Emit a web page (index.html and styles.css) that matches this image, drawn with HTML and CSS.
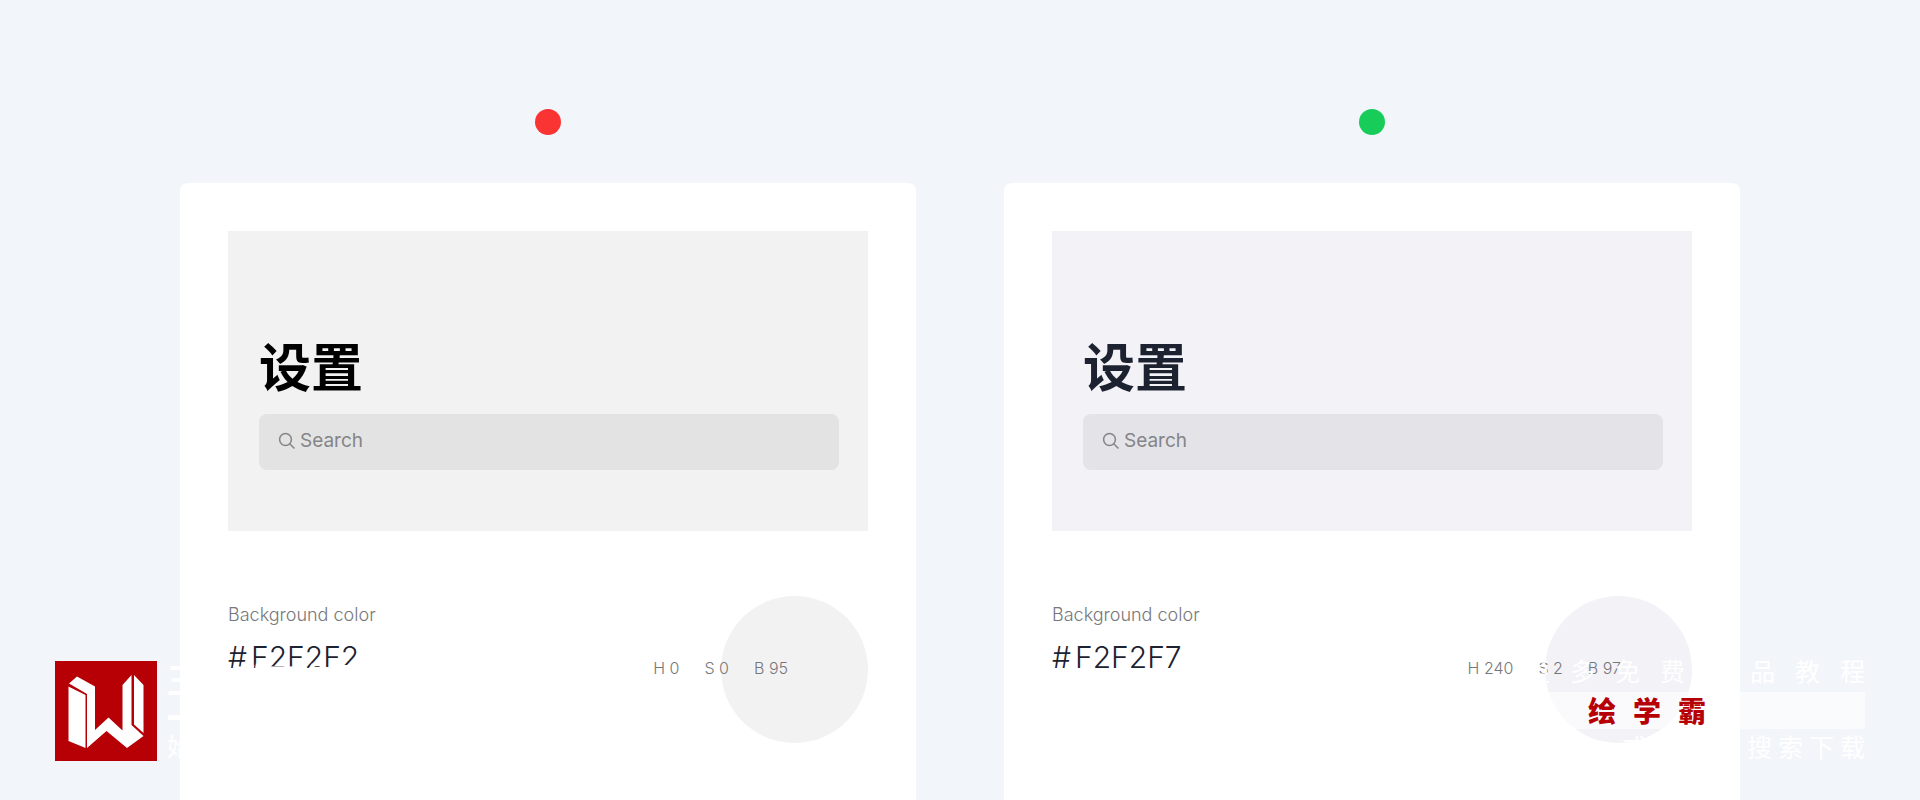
FILE: index.html
```html
<!DOCTYPE html>
<html lang="zh-CN">
<head>
<meta charset="utf-8">
<title>Background color</title>
<link rel="stylesheet" href="styles.css">
</head>
<body>
<main class="board">
  <section class="sample sample-neutral">
    <span class="dot"></span>
    <article class="card">
      <div class="preview">
        <h2 class="title">设置</h2>
        <label class="search">
          <svg class="search-icon" viewBox="0 0 16 16" aria-hidden="true"><circle cx="6.500" cy="6.500" r="5.900"/><path d="M10.700 10.700L15.500 15.500"/></svg>
          <input type="search" placeholder="Search" aria-label="Search">
        </label>
      </div>
      <div class="info">
        <div class="name">
          <p class="caption">Background color</p>
          <p class="hex"><span>#</span><span>F2F2F2</span></p>
        </div>
        <div class="values"><span>H 0</span><span>S 0</span><span>B 95</span></div>
        <span class="swatch"></span>
      </div>
    </article>
  </section>
  <section class="sample sample-tinted">
    <span class="dot"></span>
    <article class="card">
      <div class="preview">
        <h2 class="title">设置</h2>
        <label class="search">
          <svg class="search-icon" viewBox="0 0 16 16" aria-hidden="true"><circle cx="6.500" cy="6.500" r="5.900"/><path d="M10.700 10.700L15.500 15.500"/></svg>
          <input type="search" placeholder="Search" aria-label="Search">
        </label>
      </div>
      <div class="info">
        <div class="name">
          <p class="caption">Background color</p>
          <p class="hex"><span>#</span><span>F2F2F7</span></p>
        </div>
        <div class="values"><span>H 240</span><span>S 2</span><span>B 97</span></div>
        <span class="swatch"></span>
      </div>
    </article>
  </section>
</main>
<aside class="brand">
  <svg class="logo" viewBox="0 0 102 100" role="img" aria-label="W">
    <path fill="#b60005" d="M0 0h102v100H0z"/>
    <path fill="#fff" d="M14 22.500L22 15.500L40 25.500V69L53.500 56.500L67.500 69.500V24L76.500 14V64L88.500 75L72 87L51.500 70L32 87V33zM13.500 25.500L30.500 34V87L13.500 80zM79 14L88.500 24V72L79 63.500z"/>
  </svg>
  <div class="brand-text"><p class="brand-name">王氏教育集团</p><p class="brand-line">一</p><p class="brand-since">始</p></div>
</aside>
<aside class="promo">
  <p class="promo-top"><span>更</span><span>多</span><span>免</span><span>费</span><span>精</span><span>品</span><span>教</span><span>程</span></p>
  <p class="promo-name"><span>绘</span><span>学</span><span>霸</span></p>
  <p class="promo-bottom"><span>或</span><span class="download"><span>搜</span><span>索</span><span>下</span><span>载</span></span></p>
</aside>
</body>
</html>
```
FILE: styles.css
```css
* { box-sizing: border-box; }
body {
  margin: 0;
  min-height: 100vh;
  overflow: hidden;
  background: #f2f6fb;
  color: #1d2230;
  font-family: Inter, "Noto Sans CJK SC", sans-serif;
}
p, h2 { margin: 0; }
.board {
  display: grid;
  grid-template-columns: 1fr 1fr;
  gap: 88px;
  height: 100vh;
  padding: 109px 180px 0;
}
.sample { display: flex; flex-direction: column; align-items: center; gap: 48px; }
.sample-neutral { --tone: #f2f2f2; --field: #e3e3e3; --dot: #fa3333; --ink: #000; }
.sample-tinted { --tone: #f2f2f7; --field: #e3e3e8; --dot: #17cc58; --ink: #1d2230; }
.dot { width: 26px; height: 26px; border-radius: 50%; background: var(--dot); }
.card { flex: 1; width: 100%; padding: 48px 48px 0; border-radius: 8px 8px 0 0; background: #fff; }
.preview { height: 300px; padding: 98px 29px 0 31px; background: var(--tone); }
.title {
  padding-bottom: 13px;
  color: var(--ink);
  font: 700 52px/72px "Noto Sans CJK SC", sans-serif;
}
.search {
  display: flex;
  align-items: center;
  gap: 5px;
  height: 56px;
  padding: 0 20px 2px;
  border-radius: 8px;
  background: var(--field);
}
.search-icon { width: 16px; height: 16px; fill: none; stroke: #858588; stroke-width: 1.5; overflow: visible; }
.search input {
  flex: 1;
  min-width: 0;
  padding: 0;
  border: 0;
  outline: 0;
  background: none;
  font: 400 19px/28px Inter, sans-serif;
}
.search input::placeholder { color: #858588; opacity: 1; }
.info { display: flex; align-items: center; padding-top: 65px; }
.name { flex: 1; align-self: flex-start; padding-top: 5px; }
.caption { color: #77777a; font-size: 18px; font-weight: 350; line-height: 28px; }
.hex { display: flex; gap: 4px; padding-top: 10px; font-size: 30px; font-weight: 350; line-height: 36px; }
.values {
  position: relative;
  z-index: 1;
  display: flex;
  gap: 25px;
  margin-right: -67px;
  padding-bottom: 3px;
  color: #77777a;
  font-size: 16px;
  font-weight: 350;
  line-height: 24px;
}
.sample-tinted .values { margin-right: -76px; }
.swatch { width: 147px; height: 147px; border-radius: 50%; background: var(--tone); }

.brand {
  position: absolute;
  z-index: 2;
  left: 55px;
  bottom: 39px;
  display: flex;
  gap: 10px;
  color: #fff;
  font-family: "Noto Sans CJK SC", sans-serif;
}
.logo { width: 102px; height: 100px; }
.brand-name { font-size: 34px; font-weight: 700; line-height: 36px; }
.brand-line { font-size: 30px; font-weight: 900; line-height: 38px; }
.brand-since { font-size: 25px; font-weight: 400; line-height: 20px; }
.promo {
  position: absolute;
  z-index: 2;
  right: 55px;
  bottom: 36px;
  width: 427px;
  color: #fff;
  font: 400 25px/37px "Noto Sans CJK SC", sans-serif;
}
.promo-top { display: flex; justify-content: flex-end; gap: 20px; padding-bottom: 3px; }
.promo-name {
  display: flex;
  gap: 17px;
  padding-left: 150px;
  background: rgba(255, 255, 255, 0.6);
  color: #b60005;
  font-size: 28px;
  font-weight: 900;
}
.promo-bottom { display: flex; justify-content: space-between; padding-left: 184px; line-height: 35px; }
.download { display: flex; gap: 6px; }
```
